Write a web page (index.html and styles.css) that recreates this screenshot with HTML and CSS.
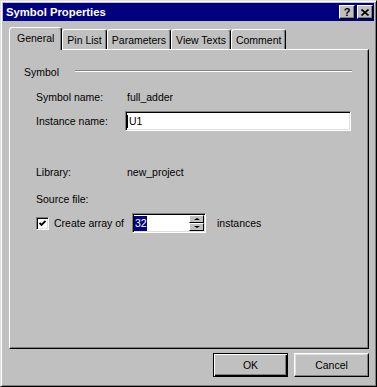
FILE: index.html
```html
<!DOCTYPE html>
<html>
<head>
<meta charset="utf-8">
<title>Symbol Properties</title>
<link rel="stylesheet" href="styles.css">
</head>
<body>
<div class="window">
  <div class="titlebar">
    <span class="title">Symbol Properties</span>
    <div class="caption-buttons">
      <span class="cap-btn help">?</span>
      <span class="cap-btn close"><svg width="8" height="7" viewBox="0 0 8 7"><path d="M0.5 0.5 L7.5 6.5 M7.5 0.5 L0.5 6.5" stroke="#000" stroke-width="1.6" fill="none"/></svg></span>
    </div>
  </div>
  <div class="tabs">
    <div class="tab active">General</div>
    <div class="tab">Pin List</div>
    <div class="tab">Parameters</div>
    <div class="tab">View Texts</div>
    <div class="tab">Comment</div>
  </div>
  <div class="panel">
    <div class="group-head"><span class="group-label">Symbol</span><span class="etch"></span></div>
    <div class="row first">
      <span class="label">Symbol name:</span><span class="value">full_adder</span>
    </div>
    <div class="row gap-s">
      <span class="label">Instance name:</span>
      <div class="textbox wide"><span class="caret"></span>U1</div>
    </div>
    <div class="row gap-l">
      <span class="label">Library:</span><span class="value">new_project</span>
    </div>
    <div class="row gap-m">
      <span class="label">Source file:</span>
    </div>
    <div class="row gap-s">
      <span class="checkbox"><svg width="7" height="7" viewBox="0 0 7 7"><path d="M0.5 3 L2.5 5 L6.5 1" stroke="#000" stroke-width="1.8" fill="none"/></svg></span>
      <span class="cb-label">Create array of</span>
      <div class="textbox spin">
        <span class="sel">32</span>
        <div class="spinner">
          <span class="sp"><span class="arrow-up"></span></span>
          <span class="sp"><span class="arrow-down"></span></span>
        </div>
      </div>
      <span class="after">instances</span>
    </div>
  </div>
  <div class="buttons">
    <button class="btn default">OK</button>
    <button class="btn">Cancel</button>
  </div>
</div>
</body>
</html>
```

FILE: styles.css
```css
* { box-sizing: border-box; }
html, body { margin: 0; padding: 0; }
body {
  width: 377px;
  height: 387px;
  background: #c0c0c0;
  font-family: "Liberation Sans", Arial, sans-serif;
  font-size: 10.5px;
  color: #000;
  overflow: hidden;
}
.window {
  width: 377px;
  height: 387px;
  border: 1px solid;
  border-color: #dfdfdf #000 #000 #dfdfdf;
  box-shadow: inset 1px 1px #fff, inset -1px -1px #808080;
  padding: 2px;
  display: flex;
  flex-direction: column;
  background: #c0c0c0;
}
.titlebar {
  flex: none;
  height: 18px;
  background: #000080;
  display: flex;
  align-items: center;
  justify-content: space-between;
  padding: 0 1px 0 3px;
  color: #fff;
}
.title { font-weight: bold; font-size: 11.3px; }
.caption-buttons { display: flex; gap: 2px; }
.cap-btn {
  width: 16px;
  height: 14px;
  background: #c0c0c0;
  border: 1px solid;
  border-color: #fff #000 #000 #fff;
  box-shadow: inset -1px -1px #808080;
  display: flex;
  align-items: center;
  justify-content: center;
  color: #000;
  font-weight: bold;
  font-size: 11px;
  line-height: 1;
}
.tabs {
  flex: none;
  display: flex;
  align-items: flex-end;
  height: 23px;
  margin-top: 6px;
  margin-bottom: -1px;
  padding-left: 6px;
  position: relative;
  z-index: 1;
}
.tab {
  height: 20px;
  margin-bottom: 1px;
  padding: 0 4px;
  border: 1px solid;
  border-bottom: none;
  border-color: #fff #000 transparent #fff;
  box-shadow: inset -1px 0 #808080;
  border-radius: 3px 3px 0 0;
  display: flex;
  align-items: center;
  background: #c0c0c0;
}
.tab.active {
  height: 23px;
  margin-bottom: 0;
  padding: 0 7px 2px;
}
.panel {
  flex: none;
  height: 300px;
  margin: 0 5px 0 6px;
  border: 1px solid;
  border-color: #fff #000 #000 #fff;
  box-shadow: inset -1px -1px #808080;
  padding: 15px 16px 0 14px;
}
.group-head {
  height: 14px;
  display: flex;
  align-items: center;
}
.etch {
  flex: 1;
  height: 2px;
  margin-left: 16px;
  margin-top: -2px;
  border-top: 1px solid #808080;
  border-bottom: 1px solid #fff;
}
.row {
  height: 20px;
  margin-left: 12px;
  display: flex;
  align-items: center;
}
.row.first { margin-top: 8px; }
.row.gap-s { margin-top: 4px; }
.row.gap-m { margin-top: 7px; }
.row.gap-l { margin-top: 31px; }
.label { width: 89px; flex: none; }
.value { padding-left: 2px; }
.textbox {
  height: 20px;
  background: #fff;
  border: 1px solid;
  border-color: #808080 #fff #fff #808080;
  box-shadow: inset 1px 1px #000, inset -1px -1px #dfdfdf;
  display: flex;
  align-items: center;
  padding: 0 2px 0 1px;
}
.textbox.wide { width: 226px; }
.caret { width: 1px; height: 13px; background: #000; margin-right: 1px; }
.checkbox {
  width: 13px;
  height: 13px;
  flex: none;
  background: #fff;
  border: 1px solid;
  border-color: #808080 #fff #fff #808080;
  box-shadow: inset 1px 1px #000, inset -1px -1px #dfdfdf;
  display: flex;
  align-items: center;
  justify-content: center;
}
.cb-label { width: 78px; margin-left: 5px; flex: none; }
.textbox.spin { width: 74px; padding: 0 1px 0 1px; }
.sel {
  background: #000080;
  color: #fff;
  padding: 1px 0 1px 1px;
  width: 13px;
  line-height: 13px;
}
.spinner {
  margin-left: auto;
  width: 15px;
  height: 16px;
  display: flex;
  flex-direction: column;
}
.sp {
  flex: 1;
  background: #c0c0c0;
  border: 1px solid;
  border-color: #fff #000 #000 #fff;
  display: flex;
  align-items: center;
  justify-content: center;
}
.arrow-up, .arrow-down {
  width: 0;
  height: 0;
  border-left: 3px solid transparent;
  border-right: 3px solid transparent;
}
.arrow-up { border-bottom: 2px solid #000; }
.arrow-down { border-top: 2px solid #000; }
.after { margin-left: 11px; }
.buttons {
  flex: none;
  display: flex;
  justify-content: flex-end;
  gap: 6px;
  margin-top: 4px;
  padding-right: 5px;
}
.btn {
  width: 75px;
  height: 24px;
  font: inherit;
  color: #000;
  background: #c0c0c0;
  border: 1px solid;
  border-color: #fff #000 #000 #fff;
  box-shadow: inset -1px -1px #808080, inset 1px 1px #dfdfdf;
  padding: 0;
}
.btn.default {
  border-color: #000;
  box-shadow: inset 1px 1px #fff, inset -1px -1px #000, inset -2px -2px #808080;
}
```
